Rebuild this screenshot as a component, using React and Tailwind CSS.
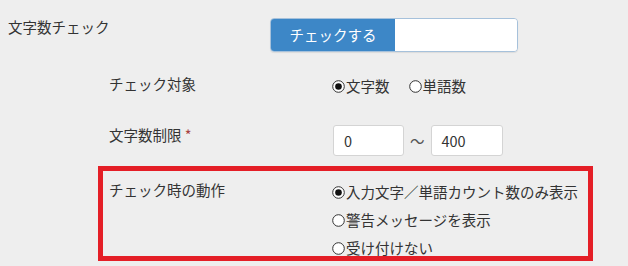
import React from "react";

function Radio({ checked, label, className = "" }) {
  return (
    <label className={`inline-flex items-center ${className}`}>
      <svg width="13" height="13" viewBox="0 0 13 13" className="mr-[1px] shrink-0">
        <circle cx="6.5" cy="6.5" r="5.8" fill="white" stroke="#333" strokeWidth="1" />
        {checked && <circle cx="6.5" cy="6.5" r="3.3" fill="#111" />}
      </svg>
      <span>{label}</span>
    </label>
  );
}

export default function App() {
  const font = {
    fontFamily: '"Noto Sans CJK JP", "Noto Sans", sans-serif',
  };

  return (
    <div
      className="w-[628px] h-[266px] overflow-hidden bg-[#eeeeee] text-[#333] text-[14.5px] pt-[17px]"
      style={font}
    >
      <div className="flex items-start">
        <div className="w-[270px] pl-[8px] leading-[20px]">文字数チェック</div>
        <div className="mt-[1px] flex h-[34px] w-[248px] rounded-[4px] border border-[#a6c1db] overflow-hidden shadow-[0_1px_1px_rgba(0,0,0,0.08)]">
          <div className="w-[124px] bg-[#3d87c7] text-white flex items-center justify-center">
            チェックする
          </div>
          <div className="flex-1 bg-white"></div>
        </div>
      </div>

      <div className="ml-[109px] mt-[22px] flex items-start">
        <div className="w-[223px] leading-[20px]">チェック対象</div>
        <div className="mt-[2px] flex items-center leading-[20px]">
          <Radio checked label="文字数" />
          <Radio label="単語数" className="ml-[19px]" />
        </div>
      </div>

      <div className="ml-[109px] mt-[28px] flex items-start">
        <div className="w-[224px] leading-[22px]">
          文字数制限 <span className="text-[#a94442]">*</span>
        </div>
        <div className="mt-[1px] flex items-center">
          <div className="w-[71px] h-[31px] bg-white border border-[#d4d4d4] rounded-[3px] pl-[10px] flex items-center">
            0
          </div>
          <span className="mx-[6px] text-[#555]">〜</span>
          <div className="w-[72px] h-[31px] bg-white border border-[#d4d4d4] rounded-[3px] pl-[10px] flex items-center">
            400
          </div>
        </div>
      </div>

      <div className="relative ml-[109px] mt-[22px] flex items-start">
        <div className="w-[223px] leading-[24px]">チェック時の動作</div>
        <div className="flex flex-col leading-[28px]">
          <Radio checked label="入力文字／単語カウント数のみ表示" />
          <Radio label="警告メッセージを表示" />
          <Radio label="受け付けない" />
        </div>
        <div className="absolute left-[-11px] top-[-12px] w-[495px] h-[95px] border-[5px] border-[#e41e26] pointer-events-none"></div>
      </div>
    </div>
  );
}
